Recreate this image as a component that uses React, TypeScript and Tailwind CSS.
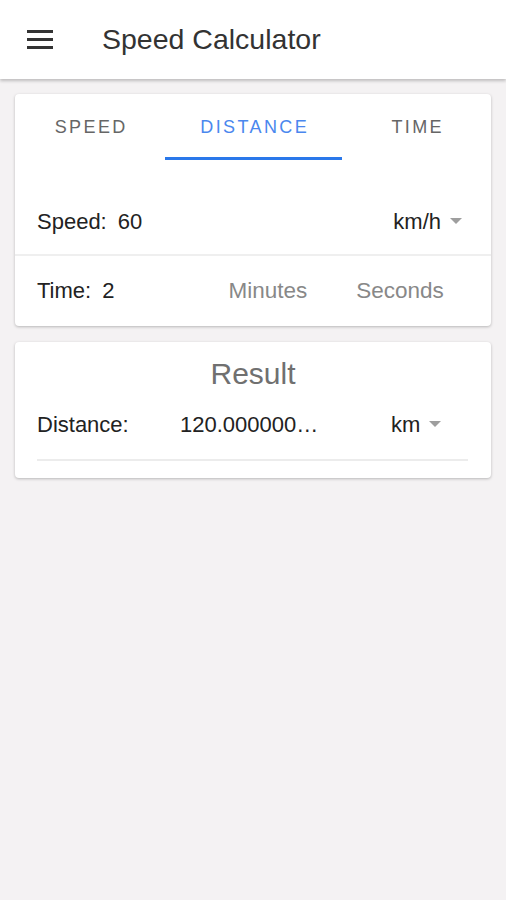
import { useState } from 'react';

const TABS = [
  { label: 'SPEED', w: 'w-[150px]' },
  { label: 'DISTANCE', w: 'w-[177px]' },
  { label: 'TIME', w: 'flex-1' },
];

function Caret() {
  return (
    <svg width="12" height="6" viewBox="0 0 12 6" className="ml-[9px]">
      <path d="M0 0 L12 0 L6 6 Z" fill="#9e9e9e" />
    </svg>
  );
}

export default function App() {
  const [tab, setTab] = useState(1);

  return (
    <div
      className="w-[506px] h-[900px] bg-[#f4f2f3] flex flex-col"
      style={{ fontFamily: '"Liberation Sans", Arial, sans-serif' }}
    >
      {/* App bar */}
      <header className="h-[79px] bg-white flex items-center shadow-[0_2px_3px_rgba(0,0,0,0.22)] relative z-10">
        <div className="w-[26px] ml-[27px] flex flex-col gap-[5px]">
          <span className="h-[3px] bg-[#333] block" />
          <span className="h-[3px] bg-[#333] block" />
          <span className="h-[3px] bg-[#333] block" />
        </div>
        <h1 className="ml-[49px] text-[28.5px] text-[#333] leading-none">Speed Calculator</h1>
      </header>

      {/* Input card */}
      <div className="mx-[15px] mt-[15px] bg-white rounded-[4px] shadow-[0_1px_3px_rgba(0,0,0,0.25)]">
        <div className="flex h-[66px]">
          {TABS.map((t, i) => (
            <button
              key={t.label}
              onClick={() => setTab(i)}
              className={`${t.w} relative flex items-center justify-center text-[18px] tracking-[2.4px] ${
                tab === i ? 'text-[#4a87ee]' : 'text-[#666]'
              }`}
            >
              <span className="mt-[1px] -mr-[2.4px]">{t.label}</span>
              {tab === i && <span className="absolute left-0 right-0 bottom-0 h-[3px] bg-[#2a78ea]" />}
            </button>
          ))}
        </div>

        <div className="h-[96px] flex items-center pt-[28px] pl-[22px] pr-[29px] border-b-2 border-[#efefef] text-[22px] text-[#222]">
          <span>Speed:</span>
          <span className="ml-[11px]">60</span>
          <span className="ml-auto flex items-center">
            km/h
            <Caret />
          </span>
        </div>

        <div className="h-[70px] flex items-center pl-[22px] text-[22px] text-[#222] pb-[2px]">
          <span>Time:</span>
          <span className="ml-[11px]">2</span>
          <span className="ml-[114px] text-[#888] text-[22.5px] mt-[1px]">Minutes</span>
          <span className="ml-[49px] text-[#888] text-[22.5px] mt-[1px]">Seconds</span>
        </div>
      </div>

      {/* Result card */}
      <div className="mx-[15px] mt-[16px] bg-white rounded-[4px] shadow-[0_1px_3px_rgba(0,0,0,0.25)] px-[22px] pb-[17px]">
        <div className="h-[62px] flex items-center justify-center text-[30px] text-[#707070]">Result</div>
        <div className="flex items-center h-[40px] text-[22px] text-[#222]">
          <span className="w-[143px]">Distance:</span>
          <span className="w-[150px] whitespace-nowrap">120.000000…</span>
          <span className="ml-[61px] flex items-center">
            km
            <Caret />
          </span>
        </div>
        <div className="mt-[15px] h-[2px] bg-[#ececec] mr-[1px]" />
      </div>
    </div>
  );
}
